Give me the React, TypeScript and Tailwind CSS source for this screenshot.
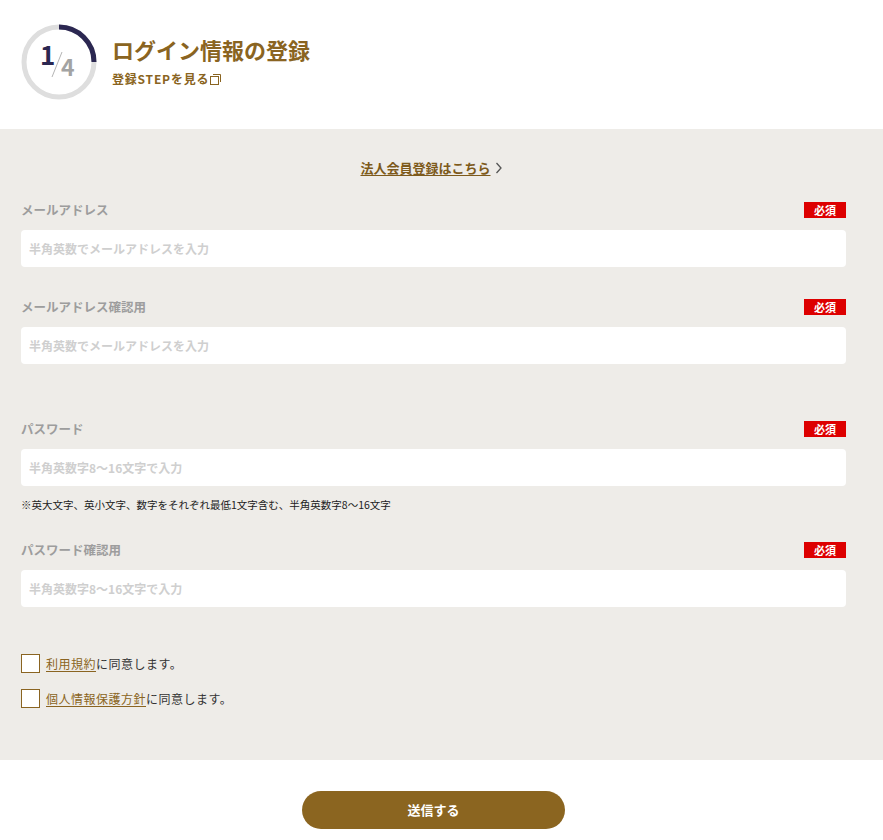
import React from "react";

const font = {
  fontFamily: '"Noto Sans CJK JP", "Noto Sans", sans-serif',
};

const StepCircle = () => (
  <div className="relative w-[76px] h-[76px] shrink-0">
    <svg width="76" height="76" viewBox="0 0 76 76" className="absolute inset-0">
      <circle cx="38" cy="38" r="35" fill="none" stroke="#dedede" strokeWidth="5" />
      <path d="M38 3 A35 35 0 0 1 73 38" fill="none" stroke="#2b2751" strokeWidth="5" />
      <line x1="31" y1="53" x2="41" y2="28" stroke="#b5b5b5" strokeWidth="1" />
    </svg>
    <span className="absolute left-[19px] top-[17px] text-[26px] font-bold leading-none text-[#2b2751]">
      1
    </span>
    <span className="absolute left-[40px] top-[31px] text-[23px] font-bold leading-none text-[#a3a3a3]">
      4
    </span>
  </div>
);

const Field = ({
  label,
  placeholder,
  className,
}: {
  label: string;
  placeholder: string;
  className?: string;
}) => (
  <div className={className}>
    <div className="flex items-center justify-between h-4">
      <span className="text-[12.5px] font-bold text-[#9d9d9d] leading-4">{label}</span>
      <span className="w-[42px] h-4 bg-[#dd0000] text-white text-[11px] font-bold leading-4 text-center">
        必須
      </span>
    </div>
    <input
      type="text"
      placeholder={placeholder}
      className="mt-3 block w-full h-[37px] bg-white rounded-[4px] px-2 text-[12px] font-bold placeholder:text-[#cfcfcf] outline-none"
      style={font}
    />
  </div>
);

const App = () => {
  return (
    <div className="w-[883px] bg-white" style={font}>
      <header className="h-[129px] flex items-start pt-[24px] pl-[21px]">
        <StepCircle />
        <div className="ml-[15px] mt-[10px]">
          <h1 className="text-[22px] font-bold leading-[30px] text-[#8a6421]">
            ログイン情報の登録
          </h1>
          <a className="mt-[6px] flex items-center text-[12px] font-bold leading-[18px] text-[#8a6421] tracking-[0.8px]">
            登録STEPを見る
            <svg width="11" height="11" viewBox="0 0 11 11" className="ml-[1px]">
              <rect x="0.5" y="2.5" width="8" height="8" fill="none" stroke="#8a6421" strokeWidth="1" />
              <path d="M3 0.5 H10.5 V8" fill="none" stroke="#8a6421" strokeWidth="1" />
            </svg>
          </a>
        </div>
      </header>

      <section className="h-[631px] bg-[#eeece8] pt-[29px]">
        <div className="w-[825px] ml-[21px]">
          <div className="flex justify-center items-center h-5 pr-[4px]">
            <a className="text-[13px] font-bold text-[#7d5a1b] underline underline-offset-2 leading-5">
              法人会員登録はこちら
            </a>
            <svg width="8" height="12" viewBox="0 0 8 12" className="ml-[4px]">
              <path d="M1.5 1 L6 6 L1.5 11" fill="none" stroke="#555" strokeWidth="1.3" />
            </svg>
          </div>

          <Field className="mt-[24px]" label="メールアドレス" placeholder="半角英数でメールアドレスを入力" />
          <Field className="mt-[32px]" label="メールアドレス確認用" placeholder="半角英数でメールアドレスを入力" />
          <Field className="mt-[57px]" label="パスワード" placeholder="半角英数字8〜16文字で入力" />
          <p className="mt-[11px] text-[10.5px] text-[#222] leading-4">
            ※英大文字、英小文字、数字をそれぞれ最低1文字含む、半角英数字8〜16文字
          </p>
          <Field className="mt-[29px]" label="パスワード確認用" placeholder="半角英数字8〜16文字で入力" />

          <div className="mt-[47px] flex flex-col gap-[16px]">
            <label className="flex items-center">
              <span className="w-[19px] h-[19px] bg-white border border-[#8a6421] shrink-0" />
              <span className="ml-[6px] text-[12px] text-[#333] leading-[19px] tracking-[0.5px]">
                <span className="text-[#8a6421] underline underline-offset-2">利用規約</span>
                に同意します。
              </span>
            </label>
            <label className="flex items-center">
              <span className="w-[19px] h-[19px] bg-white border border-[#8a6421] shrink-0" />
              <span className="ml-[6px] text-[12px] text-[#333] leading-[19px] tracking-[0.5px]">
                <span className="text-[#8a6421] underline underline-offset-2">個人情報保護方針</span>
                に同意します。
              </span>
            </label>
          </div>
        </div>
      </section>

      <div className="h-[80px] flex justify-center pt-[31px] pr-[16px]">
        <button className="w-[263px] h-[38px] rounded-full bg-[#8b6520] text-white text-[13px] font-bold">
          送信する
        </button>
      </div>
    </div>
  );
};

export default App;
